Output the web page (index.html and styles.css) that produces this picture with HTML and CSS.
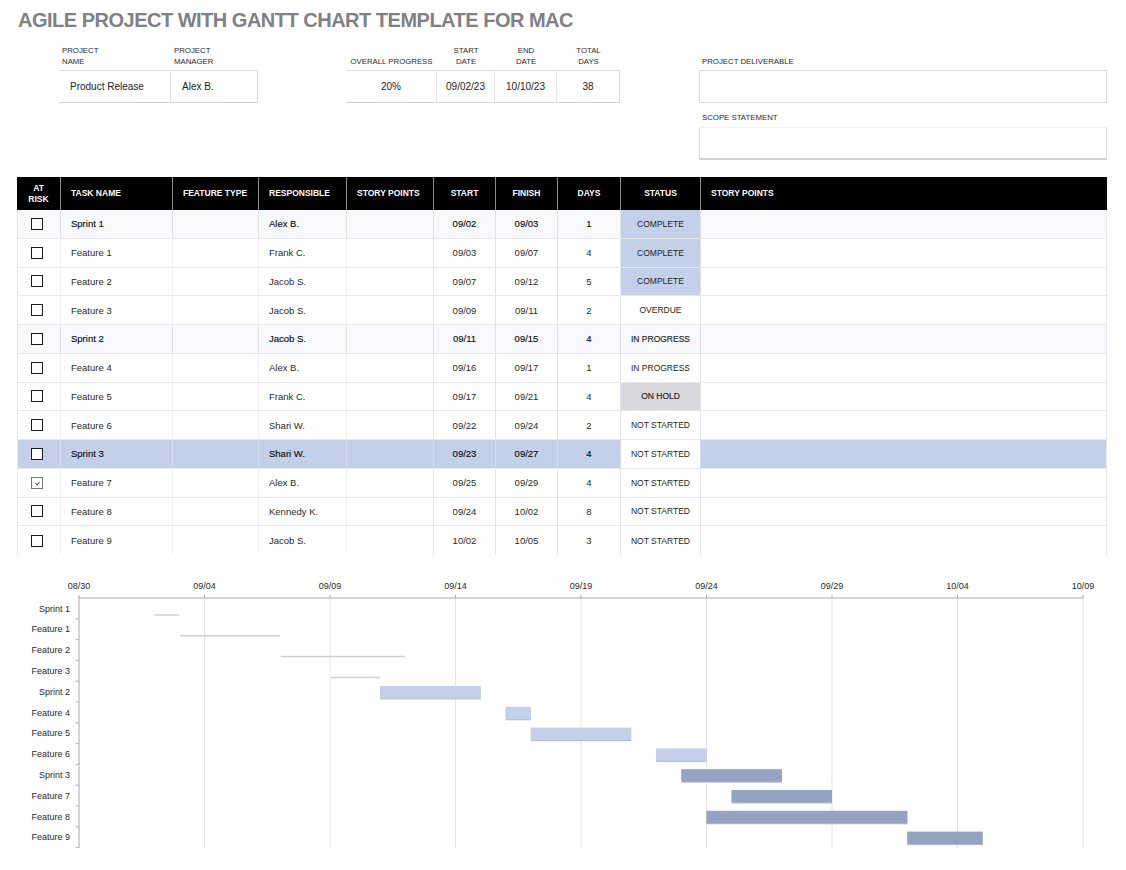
FILE: index.html
```html
<!DOCTYPE html>
<html lang="en">
<head>
<meta charset="utf-8">
<title>Agile Project with Gantt Chart Template for Mac</title>
<link rel="stylesheet" href="styles.css">
</head>
<body>
<h1 class="title">AGILE PROJECT WITH GANTT CHART TEMPLATE FOR MAC</h1>

<section class="info">
  <div class="lbl c1">PROJECT<br>NAME</div>
  <div class="lbl c2">PROJECT<br>MANAGER</div>
  <div class="lbl c4 ctr">OVERALL PROGRESS</div>
  <div class="lbl c5 ctr">START<br>DATE</div>
  <div class="lbl c6 ctr">END<br>DATE</div>
  <div class="lbl c7 ctr">TOTAL<br>DAYS</div>
  <div class="lbl c9">PROJECT DELIVERABLE</div>

  <div class="val c1 pad">Product Release</div>
  <div class="val c2 pad last">Alex B.</div>
  <div class="val c4 ctr">20%</div>
  <div class="val c5 ctr">09/02/23</div>
  <div class="val c6 ctr">10/10/23</div>
  <div class="val c7 ctr last">38</div>
  <div class="box c9 r2"></div>

  <div class="lbl c9 r3">SCOPE STATEMENT</div>
  <div class="box scope c9 r4"></div>
</section>

<section class="tasks">
  <div class="row head">
    <div class="ctr">AT<br>RISK</div>
    <div class="pl">TASK NAME</div>
    <div class="pl">FEATURE TYPE</div>
    <div class="pl">RESPONSIBLE</div>
    <div class="pl">STORY POINTS</div>
    <div class="ctr">START</div>
    <div class="ctr">FINISH</div>
    <div class="ctr">DAYS</div>
    <div class="ctr">STATUS</div>
    <div class="pl">STORY POINTS</div>
  </div>

  <div class="row sprint">
    <div class="chk"><span class="cb"></span></div>
    <div class="pl">Sprint 1</div><div></div><div class="pl">Alex B.</div><div></div>
    <div class="ctr">09/02</div><div class="ctr">09/03</div><div class="ctr">1</div>
    <div class="ctr st complete">COMPLETE</div><div></div>
  </div>
  <div class="row">
    <div class="chk"><span class="cb"></span></div>
    <div class="pl">Feature 1</div><div></div><div class="pl">Frank C.</div><div></div>
    <div class="ctr">09/03</div><div class="ctr">09/07</div><div class="ctr">4</div>
    <div class="ctr st complete">COMPLETE</div><div></div>
  </div>
  <div class="row">
    <div class="chk"><span class="cb"></span></div>
    <div class="pl">Feature 2</div><div></div><div class="pl">Jacob S.</div><div></div>
    <div class="ctr">09/07</div><div class="ctr">09/12</div><div class="ctr">5</div>
    <div class="ctr st complete">COMPLETE</div><div></div>
  </div>
  <div class="row">
    <div class="chk"><span class="cb"></span></div>
    <div class="pl">Feature 3</div><div></div><div class="pl">Jacob S.</div><div></div>
    <div class="ctr">09/09</div><div class="ctr">09/11</div><div class="ctr">2</div>
    <div class="ctr st">OVERDUE</div><div></div>
  </div>
  <div class="row sprint">
    <div class="chk"><span class="cb"></span></div>
    <div class="pl">Sprint 2</div><div></div><div class="pl">Jacob S.</div><div></div>
    <div class="ctr">09/11</div><div class="ctr">09/15</div><div class="ctr">4</div>
    <div class="ctr st">IN PROGRESS</div><div></div>
  </div>
  <div class="row">
    <div class="chk"><span class="cb"></span></div>
    <div class="pl">Feature 4</div><div></div><div class="pl">Alex B.</div><div></div>
    <div class="ctr">09/16</div><div class="ctr">09/17</div><div class="ctr">1</div>
    <div class="ctr st">IN PROGRESS</div><div></div>
  </div>
  <div class="row">
    <div class="chk"><span class="cb"></span></div>
    <div class="pl">Feature 5</div><div></div><div class="pl">Frank C.</div><div></div>
    <div class="ctr">09/17</div><div class="ctr">09/21</div><div class="ctr">4</div>
    <div class="ctr st hold">ON HOLD</div><div></div>
  </div>
  <div class="row">
    <div class="chk"><span class="cb"></span></div>
    <div class="pl">Feature 6</div><div></div><div class="pl">Shari W.</div><div></div>
    <div class="ctr">09/22</div><div class="ctr">09/24</div><div class="ctr">2</div>
    <div class="ctr st">NOT STARTED</div><div></div>
  </div>
  <div class="row sprint hl">
    <div class="chk"><span class="cb"></span></div>
    <div class="pl">Sprint 3</div><div></div><div class="pl">Shari W.</div><div></div>
    <div class="ctr">09/23</div><div class="ctr">09/27</div><div class="ctr">4</div>
    <div class="ctr st plain">NOT STARTED</div><div></div>
  </div>
  <div class="row">
    <div class="chk"><span class="cb checked"></span></div>
    <div class="pl">Feature 7</div><div></div><div class="pl">Alex B.</div><div></div>
    <div class="ctr">09/25</div><div class="ctr">09/29</div><div class="ctr">4</div>
    <div class="ctr st">NOT STARTED</div><div></div>
  </div>
  <div class="row">
    <div class="chk"><span class="cb"></span></div>
    <div class="pl">Feature 8</div><div></div><div class="pl">Kennedy K.</div><div></div>
    <div class="ctr">09/24</div><div class="ctr">10/02</div><div class="ctr">8</div>
    <div class="ctr st">NOT STARTED</div><div></div>
  </div>
  <div class="row lastrow">
    <div class="chk"><span class="cb"></span></div>
    <div class="pl">Feature 9</div><div></div><div class="pl">Jacob S.</div><div></div>
    <div class="ctr">10/02</div><div class="ctr">10/05</div><div class="ctr">3</div>
    <div class="ctr st">NOT STARTED</div><div></div>
  </div>
</section>

<svg class="gantt" width="1126" height="310" viewBox="0 560 1126 310" xmlns="http://www.w3.org/2000/svg">
  <g class="grid">
    <line x1="204.5" y1="598" x2="204.5" y2="848"/>
    <line x1="330" y1="598" x2="330" y2="848"/>
    <line x1="455.5" y1="598" x2="455.5" y2="848"/>
    <line x1="581" y1="598" x2="581" y2="848"/>
    <line x1="706.5" y1="598" x2="706.5" y2="848"/>
    <line x1="832" y1="598" x2="832" y2="848"/>
    <line x1="957.5" y1="598" x2="957.5" y2="848"/>
    <line x1="1083" y1="598" x2="1083" y2="848"/>
  </g>
  <g class="axis">
    <line x1="79" y1="598" x2="1083" y2="598"/>
    <line x1="79" y1="598" x2="79" y2="848"/>
    <line x1="79" y1="595" x2="79" y2="598"/>
    <line x1="204.5" y1="595" x2="204.5" y2="598"/>
    <line x1="330" y1="595" x2="330" y2="598"/>
    <line x1="455.5" y1="595" x2="455.5" y2="598"/>
    <line x1="581" y1="595" x2="581" y2="598"/>
    <line x1="706.5" y1="595" x2="706.5" y2="598"/>
    <line x1="832" y1="595" x2="832" y2="598"/>
    <line x1="957.5" y1="595" x2="957.5" y2="598"/>
    <line x1="1083" y1="595" x2="1083" y2="598"/>
    <line x1="76" y1="618.8" x2="79" y2="618.8"/>
    <line x1="76" y1="639.6" x2="79" y2="639.6"/>
    <line x1="76" y1="660.4" x2="79" y2="660.4"/>
    <line x1="76" y1="681.2" x2="79" y2="681.2"/>
    <line x1="76" y1="702" x2="79" y2="702"/>
    <line x1="76" y1="722.8" x2="79" y2="722.8"/>
    <line x1="76" y1="743.6" x2="79" y2="743.6"/>
    <line x1="76" y1="764.4" x2="79" y2="764.4"/>
    <line x1="76" y1="785.2" x2="79" y2="785.2"/>
    <line x1="76" y1="806" x2="79" y2="806"/>
    <line x1="76" y1="826.8" x2="79" y2="826.8"/>
    <line x1="76" y1="847.6" x2="79" y2="847.6"/>
  </g>
  <g class="xlabels">
    <text x="79" y="588.5">08/30</text>
    <text x="204.5" y="588.5">09/04</text>
    <text x="330" y="588.5">09/09</text>
    <text x="455.5" y="588.5">09/14</text>
    <text x="581" y="588.5">09/19</text>
    <text x="706.5" y="588.5">09/24</text>
    <text x="832" y="588.5">09/29</text>
    <text x="957.5" y="588.5">10/04</text>
    <text x="1083" y="588.5">10/09</text>
  </g>
  <g class="ylabels">
    <text x="70" y="611.6">Sprint 1</text>
    <text x="70" y="632.4">Feature 1</text>
    <text x="70" y="653.2">Feature 2</text>
    <text x="70" y="674">Feature 3</text>
    <text x="70" y="694.8">Sprint 2</text>
    <text x="70" y="715.6">Feature 4</text>
    <text x="70" y="736.4">Feature 5</text>
    <text x="70" y="757.2">Feature 6</text>
    <text x="70" y="778">Sprint 3</text>
    <text x="70" y="798.8">Feature 7</text>
    <text x="70" y="819.6">Feature 8</text>
    <text x="70" y="840.4">Feature 9</text>
  </g>
  <g class="done">
    <line x1="154.3" y1="615" x2="179.4" y2="615"/>
    <line x1="180.4" y1="635.8" x2="279.8" y2="635.8"/>
    <line x1="280.8" y1="656.6" x2="405.3" y2="656.6"/>
    <line x1="331" y1="677.4" x2="380.2" y2="677.4"/>
  </g>
  <g class="shadow">
    <rect x="380.2" y="687" width="100.4" height="12.5"/>
    <rect x="505.7" y="707.8" width="25.1" height="12.5"/>
    <rect x="530.8" y="728.6" width="100.4" height="12.5"/>
    <rect x="656.3" y="749.4" width="50.2" height="12.5"/>
    <rect x="681.4" y="770.2" width="100.4" height="12.5"/>
    <rect x="731.6" y="791" width="100.4" height="12.5"/>
    <rect x="706.5" y="811.8" width="200.8" height="12.5"/>
    <rect x="907.3" y="832.6" width="75.3" height="12.5"/>
  </g>
  <g class="light">
    <rect x="380.2" y="686" width="100.4" height="12.5"/>
    <rect x="505.7" y="706.8" width="25.1" height="12.5"/>
    <rect x="530.8" y="727.6" width="100.4" height="12.5"/>
    <rect x="656.3" y="748.4" width="50.2" height="12.5"/>
  </g>
  <g class="dark">
    <rect x="681.4" y="769.2" width="100.4" height="12.5"/>
    <rect x="731.6" y="790" width="100.4" height="12.5"/>
    <rect x="706.5" y="810.8" width="200.8" height="12.5"/>
    <rect x="907.3" y="831.6" width="75.3" height="12.5"/>
  </g>
</svg>
</body>
</html>
```

FILE: styles.css
```css
html, body {
  margin: 0;
  padding: 0;
  background: #ffffff;
}
body {
  width: 1126px;
  font-family: "Liberation Sans", Arial, sans-serif;
  color: #222226;
}

.title {
  margin: 0;
  padding: 9px 0 0 18px;
  height: 35px;
  box-sizing: border-box;
  font-size: 20px;
  line-height: 22px;
  font-weight: bold;
  color: #808086;
  letter-spacing: -0.5px;
}

/* ---------- project info ---------- */
.info {
  display: grid;
  margin-top: 9px;
  padding-left: 59px;
  grid-template-columns: 112px 87px 88px 91px 58px 62px 63px 79px 408px;
  grid-template-rows: 26px 33px 24px 33px;
}
.lbl {
  grid-row: 1;
  align-self: end;
  padding: 0 0 3px 3px;
  font-size: 7.8px;
  line-height: 11px;
  color: #2a2a2e;
}
.lbl.ctr { text-align: center; padding-left: 0; }
.lbl.r3 { grid-row: 3; padding-bottom: 4px; }
.c1 { grid-column: 1; }
.c2 { grid-column: 2; }
.c4 { grid-column: 4; }
.c5 { grid-column: 5; }
.c6 { grid-column: 6; }
.c7 { grid-column: 7; }
.c9 { grid-column: 9; }
.r2 { grid-row: 2; }
.r4 { grid-row: 4; }

.val {
  grid-row: 2;
  display: flex;
  align-items: center;
  font-size: 10px;
  color: #222226;
  border-top: 1px solid #dcdce0;
  border-bottom: 1px solid #d4d4d8;
  border-right: 1px solid #e6e6ea;
}
.val.pad { padding-left: 11px; }
.val.ctr { justify-content: center; }
.val.last { border-right-color: #d8d8dc; }

.box {
  border: 1px solid #dcdce0;
}
.box.scope {
  border-top-color: #f2f2f4;
  border-bottom: 2px solid #d2d2d6;
}

/* ---------- task table ---------- */
.tasks {
  margin: 17px 0 0 17px;
  width: 1090px;
  border-left: 1px solid #e8e8ec;
  border-right: 1px solid #e8e8ec;
  box-sizing: border-box;
}
.row {
  display: grid;
  grid-template-columns: 42px 112px 86px 88px 87px 62px 62px 63px 80px 1fr;
  height: 28.75px;
  box-sizing: border-box;
  border-bottom: 1px solid #e8e8ec;
  font-size: 9.5px;
  color: #2a2a2e;
}
.row.lastrow { border-bottom: none; }
.row > div {
  display: flex;
  align-items: center;
  min-width: 0;
}
.row > div + div { border-left: 1px solid #f1f1f4; }
.row > div:nth-child(6),
.row > div:nth-child(7),
.row > div:nth-child(8),
.row > div:nth-child(9),
.row > div:nth-child(10) { border-left-color: #e4e4e8; }
.row .pl { padding-left: 10px; }
.row .ctr { justify-content: center; text-align: center; }

.row.head {
  height: 33px;
  margin-left: -1px;
  margin-right: -1px;
  background: #000000;
  border-bottom: none;
  color: #ffffff;
  font-weight: bold;
  font-size: 8.5px;
  line-height: 11px;
  grid-template-columns: 43px 112px 86px 88px 87px 62px 62px 63px 80px 1fr;
}
.row.head > div + div { border-left: 1px solid #8a8a8e; }

.row.sprint { background: #f8f9fc; color: #0e0e12; -webkit-text-stroke: 0.15px #0e0e12; }
.row.sprint > div + div { border-left-color: #e2e2e8; }
.row.hl { background: #c4cfe8; }
.row.hl > div + div { border-left-color: #d2dbef; }

.chk { padding-left: 13px; }
.cb {
  display: block;
  width: 10px;
  height: 10px;
  border: 1px solid #1a1a1e;
  background: #ffffff;
  position: relative;
  -webkit-text-stroke: 0;
}
.cb.checked { border-color: #77777c; }
.cb.checked::after {
  content: "";
  position: absolute;
  left: 4px;
  top: 3px;
  width: 2px;
  height: 3px;
  border-right: 1px solid #555;
  border-bottom: 1px solid #555;
  transform: rotate(40deg);
}

.row .st { font-size: 8.5px; -webkit-text-stroke: 0; color: #1e1e22; }
.row.sprint .st { -webkit-text-stroke: 0; }
.row.sprint .st:not(.complete):not(.plain) { -webkit-text-stroke: 0.15px #1e1e22; }
.st.complete { background: #c4cfe8; }
.row .st.hold { background: #d9d8dc; -webkit-text-stroke: 0.15px #1e1e22; }
.st.plain { background: #ffffff; }

/* ---------- gantt ---------- */
.gantt {
  display: block;
  margin-top: 5px;
  font-family: "Liberation Sans", Arial, sans-serif;
}
.gantt .grid line { stroke: #e6e6ea; stroke-width: 1; }
.gantt .axis line { stroke: #a8a8ae; stroke-width: 1; }
.gantt .xlabels text { font-size: 9px; fill: #2a2a2e; text-anchor: middle; }
.gantt .ylabels text { font-size: 9px; fill: #2a2a2e; text-anchor: end; }
.gantt .done line { stroke: #cfcfd4; stroke-width: 1.5; }
.gantt .shadow rect { fill: #b4bccd; }
.gantt .light rect { fill: #c4cfe9; }
.gantt .dark rect { fill: #93a3c1; }
```
